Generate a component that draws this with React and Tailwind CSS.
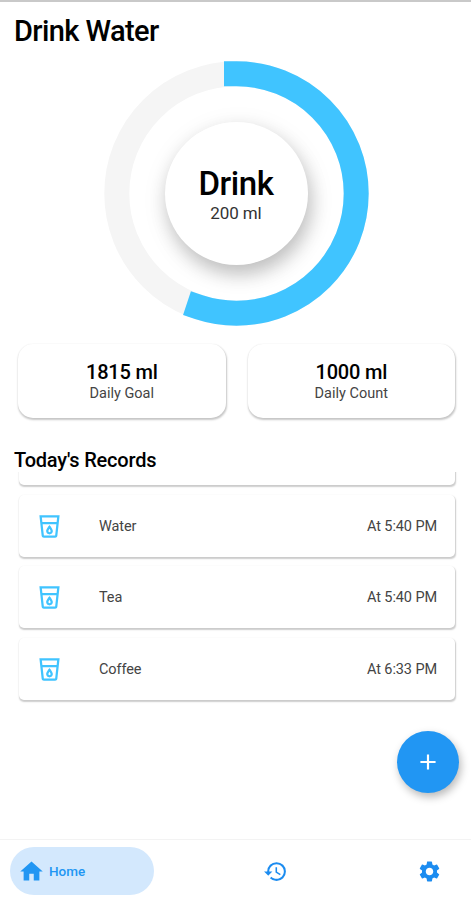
import { MdAdd, MdHistory, MdHome, MdOutlineLocalDrink, MdSettings } from 'react-icons/md';

const DAILY_GOAL = 1815;
const DAILY_COUNT = 1000;

const records = [
  { id: 1, name: 'Water', time: '5:40 PM' },
  { id: 2, name: 'Tea', time: '5:40 PM' },
  { id: 3, name: 'Coffee', time: '6:33 PM' },
];

function ProgressRing() {
  return (
    <svg className="h-[265px] w-[265px]" viewBox="0 0 265 265" fill="none" aria-hidden>
      <circle cx="132.5" cy="132.5" r="119.7" stroke="#f5f5f5" strokeWidth="25" />
      <circle
        cx="132.5"
        cy="132.5"
        r="119.7"
        stroke="#40c4ff"
        strokeWidth="25"
        strokeLinecap="square"
        pathLength={DAILY_GOAL}
        strokeDasharray={`${DAILY_COUNT} ${DAILY_GOAL}`}
        transform="rotate(-90 132.5 132.5)"
      />
    </svg>
  );
}

function StatCard({ value, label }) {
  return (
    <div className="flex h-[74px] flex-1 flex-col items-center justify-center rounded-[15px] bg-white pt-0.5 shadow-[0.5px_1.5px_2px_rgba(0,0,0,0.22),0_0_2px_rgba(0,0,0,0.03)]">
      <p className="text-[20px] font-medium leading-[23px] tracking-[-0.2px] text-black">{value} ml</p>
      <p className="text-[14.5px] leading-[19px] text-[#444]">{label}</p>
    </div>
  );
}

function RecordRow({ name, time }) {
  return (
    <div className="flex h-[62px] shrink-0 items-center rounded-[5px] bg-white pl-[17px] pr-[18px] text-[14.5px] tracking-[-0.1px] text-[#444] shadow-[0.5px_1.5px_1.5px_rgba(0,0,0,0.2),0_0_2px_rgba(0,0,0,0.03)]">
      <MdOutlineLocalDrink className="mt-px h-[27px] w-[27px] text-[#40c4ff]" />
      <span className="ml-9 mt-0.5">{name}</span>
      <span className="ml-auto mt-0.5">At {time}</span>
    </div>
  );
}

export default function App() {
  return (
    <div className="relative flex h-[900px] w-[471px] flex-col overflow-hidden border-t-2 border-[#c9c9c9] bg-white font-['Roboto',sans-serif]">
      <h1 className="ml-[14px] mt-3 text-[29px] font-medium leading-[34px] tracking-[-0.6px] text-black">Drink Water</h1>

      <div className="ml-[1px] mt-[13px] grid place-items-center *:col-start-1 *:row-start-1">
        <ProgressRing />
        <button className="flex h-[143px] w-[143px] flex-col items-center justify-center rounded-full bg-white shadow-[3px_9px_18px_rgba(0,0,0,0.2),2px_7px_28px_rgba(0,0,0,0.09)]">
          <span className="text-[33px] font-medium leading-[38px] tracking-[-0.4px] text-black">Drink</span>
          <span className="text-[17px] leading-[20px] tracking-[-0.1px] text-[#333]">200 ml</span>
        </button>
      </div>

      <div className="ml-[18px] mr-4 mt-[18px] flex gap-[22px]">
        <StatCard value={DAILY_GOAL} label="Daily Goal" />
        <StatCard value={DAILY_COUNT} label="Daily Count" />
      </div>

      <h2 className="ml-[14px] mt-[30px] text-[20px] font-medium leading-6 tracking-[-0.2px] text-black">Today's Records</h2>

      <div className="flex h-[367px] flex-col overflow-hidden pl-[19px] pr-4">
        {/* previous record, scrolled out of the list */}
        <div className="-mt-[49px] mb-[9.5px] h-[62px] shrink-0 rounded-[5px] bg-white shadow-[0.5px_1.5px_1.5px_rgba(0,0,0,0.2),0_0_2px_rgba(0,0,0,0.03)]" />
        <div className="flex flex-col gap-[9.5px]">
          {records.map(item => (
            <RecordRow key={item.id} name={item.name} time={item.time} />
          ))}
        </div>
      </div>

      <button className="absolute right-3 top-[729px] grid h-[62px] w-[62px] place-items-center rounded-full bg-[#2196f3] text-white shadow-[2px_4px_8px_rgba(0,0,0,0.28)]">
        <MdAdd className="h-[26px] w-[26px]" />
      </button>

      <nav className="flex flex-1 items-start border-t border-[#f3f3f3] pl-[10px] pt-[7px] text-[#1c8cf0]">
        <button className="flex h-12 w-[144px] items-center gap-1 rounded-full bg-[#d3e8fd] pl-2 text-[#2196f3]">
          <MdHome className="h-[27px] w-[27px]" />
          <span className="text-[13.5px] font-medium">Home</span>
        </button>
        <div className="ml-[109px] flex h-12 items-center gap-[129px]">
          <MdHistory className="h-[25px] w-[25px]" />
          <MdSettings className="h-[25px] w-[25px]" />
        </div>
      </nav>
    </div>
  );
}
